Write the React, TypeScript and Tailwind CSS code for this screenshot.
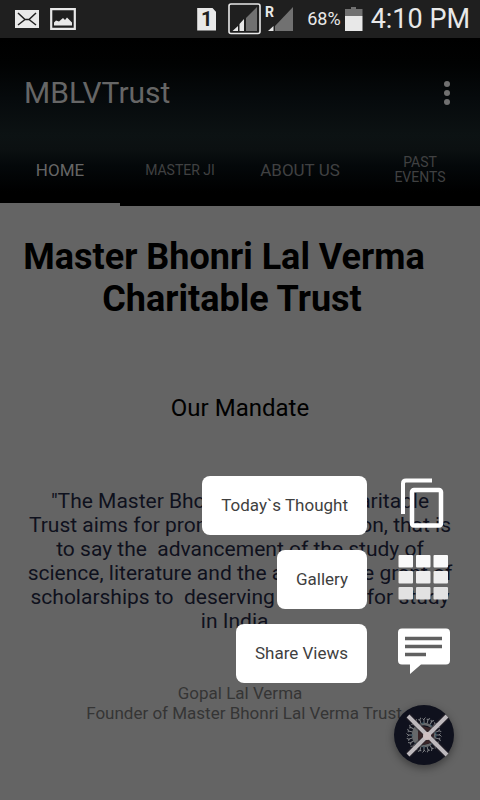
import React from "react";

const tabs = [
  { label: "HOME", size: "px-2 text-[17px] leading-5", active: true },
  { label: "MASTER JI", size: "px-2 text-sm leading-4", active: false },
  { label: "ABOUT US", size: "px-2 text-[17px] leading-5", active: false },
  { label: "PAST EVENTS", size: "px-7 text-sm leading-[15px]", active: false },
];

function StatusBar() {
  return (
    <div className="flex h-[38px] items-center bg-[#1f1f1f] pr-[10px] pl-[15px] text-[#e8e8e8]">
      <svg width="24" height="18" viewBox="0 0 24 18" aria-hidden="true">
        <path d="M0 0h24v18H0z" fill="#e8e8e8" />
        <path d="M3 3l7 6.500h4L21 3M3 15l7-5.500M21 15l-7-5.500" fill="none" stroke="#1f1f1f" strokeWidth="1.5" />
      </svg>
      <svg className="ml-[11px]" width="26" height="22" viewBox="0 0 26 22" aria-hidden="true">
        <path d="M1.200 1.200h23.600v19.600H1.200z" fill="none" stroke="#e8e8e8" strokeWidth="2.2" />
        <path d="M4 17.500v-3l2-2 3 1 4-3.500 2 2 2-2.500 5 5v3z" fill="#e8e8e8" />
      </svg>
      <div className="ml-auto flex items-center">
        <span className="flex h-[23px] w-[19px] items-center justify-center bg-[#e8e8e8] text-xl font-bold text-[#1f1f1f] [clip-path:polygon(0_0,78%_0,100%_20%,100%_100%,0_100%)]">
          1
        </span>
        <svg className="ml-3" width="33" height="32" viewBox="0 0 33 32" aria-hidden="true">
          <rect x="1" y="1" width="31" height="29.5" rx="2" fill="none" stroke="#e8e8e8" strokeWidth="1.6" />
          <path d="M18 28V15L29 4v24z" fill="#717171" />
          <path d="M4.500 28l5.500-5v5zM11.500 28v-7l4.500-5v12z" fill="#e8e8e8" />
        </svg>
        <svg className="ml-1" width="30" height="32" viewBox="0 0 30 32" aria-hidden="true">
          <path d="M10 28v-5L28 4v24z" fill="#717171" />
          <path d="M3 28l5.500-5v5z" fill="#e8e8e8" />
          <text x="0" y="14" fill="#e8e8e8" fontSize="14" fontWeight="700" fontFamily="Roboto, sans-serif">R</text>
        </svg>
        <span className="ml-3 text-lg">68%</span>
        <svg className="ml-1" width="18" height="24" viewBox="0 0 18 24" aria-hidden="true">
          <path d="M6 0h5v2h6.500v7H0V2h6z" fill="#717171" />
          <path d="M0 9h17.500v15H0z" fill="#e8e8e8" />
        </svg>
        <span className="ml-2 text-[27px] leading-8">4:10 PM</span>
      </div>
    </div>
  );
}

function Header() {
  return (
    <header className="bg-[linear-gradient(#000,#010202_15%,#060a0c_36%,#0c1213_58%,#0b1011_66%,#04080a_76%,#000_92%)]">
      <div className="flex h-24 items-center justify-between pt-3.5 pl-6">
        <h1 className="text-[30px] leading-9 text-[#666]">MBLVTrust</h1>
        <button type="button" aria-label="More options" className="flex w-[66px] justify-center">
          <svg width="6" height="24" viewBox="0 0 6 24" fill="#707070" aria-hidden="true">
            <circle cx="3" cy="3" r="3" />
            <circle cx="3" cy="12" r="3" />
            <circle cx="3" cy="21" r="3" />
          </svg>
        </button>
      </div>
      <nav className="grid h-[72px] grid-cols-4">
        {tabs.map((tab) => (
          <button
            key={tab.label}
            type="button"
            className={`border-y-[3px] border-t-transparent ${tab.size} ${
              tab.active ? "border-b-[#646464] text-[#666]" : "border-b-transparent text-[#404142]"
            }`}
          >
            {tab.label}
          </button>
        ))}
      </nav>
    </header>
  );
}

const mandate = [
  '"The Master Bhonri Lal Verma Charitable',
  "Trust aims for promotion of education, that is",
  "to say the  advancement of the study of",
  "science, literature and the arts, by the grant of",
  "scholarships to  deserving students for study",
  "in India. ",
];

function CopyIcon() {
  return (
    <svg width="60" height="60" viewBox="0 0 60 60" fill="none" stroke="#fff" aria-hidden="true">
      <path d="M9 38V7.500q0-3 3-3H38" strokeWidth="4" />
      <rect x="18" y="14" width="29" height="35.500" rx="2" strokeWidth="4.500" />
    </svg>
  );
}

function GridIcon() {
  return (
    <svg width="60" height="60" viewBox="0 0 60 60" aria-hidden="true">
      {[
        { y: 5, fill: "#fafafa" },
        { y: 21, fill: "#eeeeee" },
        { y: 37, fill: "#e2e2e2" },
      ].map((row) =>
        [4.5, 22, 39.5].map((x) => (
          <rect key={`${x}-${row.y}`} x={x} y={row.y} width="14.500" height="12.500" rx="1" fill={row.fill} />
        )),
      )}
    </svg>
  );
}

function CommentIcon() {
  return (
    <svg width="60" height="60" viewBox="0 0 60 60" aria-hidden="true">
      <path d="M8 4.500h44q4 0 4 4v28q0 4-4 4H27L16 50v-9.500H8q-4 0-4-4v-28q0-4 4-4z" fill="#fff" />
      <path d="M11 14.500h37M11 22.500h37M11 30.500h21" stroke="#606060" strokeWidth="3.500" />
    </svg>
  );
}

const actions = [
  { label: "Today`s Thought", Icon: CopyIcon },
  { label: "Gallery", Icon: GridIcon },
  { label: "Share Views", Icon: CommentIcon },
];

const rays = Array.from({ length: 24 }, (_, i) => i * 15);

function CloseLogo() {
  return (
    <svg width="60" height="60" viewBox="0 0 60 60" fill="none" aria-hidden="true">
      <g stroke="#7d7f83" strokeWidth="1">
        {rays.map((angle) => (
          <path key={angle} d="M30 18v-4l1.500-1.500M30 15l-1.500-1.500" transform={`rotate(${angle} 30 30)`} />
        ))}
      </g>
      <circle cx="30" cy="30" r="11" stroke="#66686b" strokeWidth="2.500" />
      <circle cx="30" cy="30" r="12" stroke="#235064" strokeDasharray="2 7" />
      <path d="M19 24q4-5 6-4l-1 10 1 9q-5-2-6-6z" fill="#66686b" />
      <path d="M24 27l4-6 9 2 3 7-3 8-9 2-4-6z" fill="#3b2528" />
      <path d="M14 11l39 39M53 11L14 50" stroke="#29252b" strokeWidth="7" opacity=".5" />
      <path d="M14 11l39 39M53 11L14 50" stroke="#bdb9bd" strokeWidth="4" />
      <circle cx="33" cy="31" r="4" fill="#cfc0c2" />
    </svg>
  );
}

function ActionMenu() {
  return (
    <div className="absolute right-[26px] bottom-[35px] flex flex-col items-end">
      <div className="mb-[22px] flex flex-col items-end gap-[15px]">
        {actions.map(({ label, Icon }) => (
          <button key={label} type="button" className="flex h-[59px] items-center gap-[27px]">
            <span className="flex h-full items-center rounded-lg bg-white px-[19px] text-[17px] text-[#3f3f3f]">
              {label}
            </span>
            <Icon />
          </button>
        ))}
      </div>
      <button
        type="button"
        aria-label="Close menu"
        className="size-[60px] rounded-full bg-[#0f111d] shadow-[0_3px_8px_rgba(0,0,0,0.4)]"
      >
        <CloseLogo />
      </button>
    </div>
  );
}

export default function App() {
  return (
    <div className="relative flex min-h-screen flex-col bg-[#646464] font-[Roboto,sans-serif]">
      <StatusBar />
      <Header />
      <main className="pt-[30px] text-center">
        <h2 className="text-4xl leading-[42px] font-bold text-black">
          <span className="block pr-8">Master Bhonri Lal Verma</span>
          <span className="block pr-4">Charitable Trust</span>
        </h2>
        <h3 className="mt-[74px] text-2xl leading-7 text-black">Our Mandate</h3>
        <p className="mt-[67px] text-[21px] leading-6 text-[#0f111d]">
          {mandate.map((line) => (
            <span key={line} className="block whitespace-pre">
              {line}
            </span>
          ))}
        </p>
        <p className="mt-[50px] text-[17px] leading-5 text-[#353535]">
          <span className="block">Gopal Lal Verma</span>
          <span className="block pl-2">Founder of Master Bhonri Lal Verma Trust</span>
        </p>
      </main>
      <ActionMenu />
    </div>
  );
}
